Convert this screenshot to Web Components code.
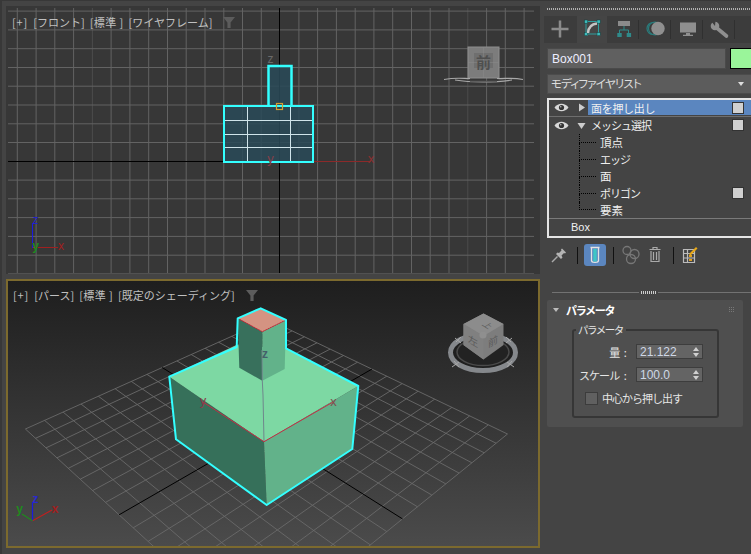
<!DOCTYPE html>
<html lang="ja"><head><meta charset="utf-8"><title>3ds Max</title>
<style>html,body{margin:0;padding:0;background:#444;overflow:hidden}</style></head>
<body>
<max-app>
  <max-viewport slot="views" labels="[+]|[フロント]|[標準 ]|[ワイヤフレーム]"><front-scene></front-scene></max-viewport>
  <max-viewport slot="views" active labels="[+]|[パース]|[標準 ]|[既定のシェーディング]"><persp-scene></persp-scene></max-viewport>
  <cmd-panel slot="panel">
    <cmd-tabs></cmd-tabs>
    <name-field value="Box001"></name-field>
    <mod-dropdown>モディファイヤリスト</mod-dropdown>
    <mod-stack>
      <stack-row selected eye arrow="right" check>面を押し出し</stack-row>
      <stack-row tight eye arrow="down" check>メッシュ選択</stack-row>
      <stack-row sub>頂点</stack-row>
      <stack-row sub tight>エッジ</stack-row>
      <stack-row sub>面</stack-row>
      <stack-row sub tight check>ポリゴン</stack-row>
      <stack-row sub last>要素</stack-row>
      <stack-row base>Box</stack-row>
    </mod-stack>
    <stack-tools></stack-tools>
    <panel-sep></panel-sep>
    <max-rollout title="パラメータ">
      <max-group legend="パラメータ">
        <max-spinner label="量 :" value="21.122"></max-spinner>
        <max-spinner label="スケール :" value="100.0"></max-spinner>
        <max-check>中心から押し出す</max-check>
      </max-group>
    </max-rollout>
  </cmd-panel>
</max-app>
<script>
const FONT = '"Noto Sans CJK JP","Liberation Sans",sans-serif';
function shadow(el, html){ el.attachShadow({mode:'open'}).innerHTML = html; }

class MaxApp extends HTMLElement{ constructor(){super(); shadow(this,`<style>
:host{display:grid;grid-template-columns:540px 211px;width:751px;height:554px;overflow:hidden;background:#444;border-top:1px solid #383838;box-sizing:border-box;font:11px ${FONT};color:#ddd}
.views{display:flex;flex-direction:column;gap:5px;padding:5px 0 0 4px;border-left:2px solid #383838;box-sizing:border-box;width:540px}
.panel{display:block;min-width:0;font-feature-settings:"palt"}
</style><div class="views"><slot name="views"></slot></div><div class="panel"><slot name="panel"></slot></div>`);}}

class MaxViewport extends HTMLElement{ constructor(){super();
  const labs=(this.getAttribute('labels')||'').split('|').map(t=>`<span>${t}</span>`).join('');
  shadow(this,`<style>
:host{display:block;position:relative;box-sizing:border-box;width:534px;height:268px;background:#373737;overflow:hidden}
:host([active]){height:269px;border:2px solid #7c6a2e;background:linear-gradient(#1e1e1e,#4b4b4b)}
.labels{position:absolute;left:6px;top:8px;display:flex;align-items:center;gap:5px;font-size:11px;line-height:16px;color:#c0c0c0}
.labels span:first-child{letter-spacing:.9px}
.labels span:nth-child(3){letter-spacing:.4px}
:host([active]) .labels{left:5px;top:6px}
svg{margin-left:5px;display:block}
</style><slot></slot><div class="labels">${labs}<svg width="14" height="13" viewBox="0 0 14 13"><path d="M1 1H13L8.600 6.500V12H5.400V6.500Z" fill="#5c5c5c"/></svg></div>`);}}

class FrontScene extends HTMLElement{ constructor(){super();
  let g='';
  for(let k=0;k<28;k++){const x=17.3+18.77*k; const major=k===4||k===24; if(k===14)continue;
    g+=`<path d="M${x.toFixed(1)} 8V273" stroke="${major?'#4c4c4c':'#636363'}"/>`;}
  for(let k=-8;k<=6;k++){const y=161.3+18.77*k; if(k===0)continue;
    g+=`<path d="M8 ${y.toFixed(1)}H534" stroke="#636363"/>`;}
  shadow(this,`<style>:host{display:block}svg{display:block;font-family:"Liberation Sans",sans-serif}</style>
<svg width="534" height="268" viewBox="6 6 534 268">
${g}
<path d="M8 161.500H224" stroke="#000"/><path d="M279.500 8V273" stroke="#000"/>
<path d="M313 161.500H371" stroke="#8c2a2a"/>
<path d="M224 106H313V162H224Z" fill="#2a4a58" fill-opacity=".88"/>
<path d="M268.500 66H291.500V106H268.500Z" fill="#2a4a58" fill-opacity=".88"/>
<g stroke="#cfe4ea" fill="none"><path d="M247.500 106V162M290.500 106V162M224 120.500H313M224 134.500H313M224 147.500H313"/></g>
<path d="M224 106H313V162H224Z" fill="none" stroke="#3ff" stroke-width="2"/>
<path d="M268.500 105.500V66H291.500V105.500" fill="none" stroke="#3ff" stroke-width="2.500"/>
<rect x="276.500" y="103.500" width="6" height="6" fill="none" stroke="#d8a030" stroke-width="1.200"/>
<text x="270.500" y="63" font-size="12" fill="#6a6a6a" text-anchor="middle">z</text>
<text x="270.500" y="163" font-size="13" fill="#84404a" text-anchor="middle">y</text>
<text x="371" y="162.500" font-size="13" fill="#8c3030" text-anchor="middle">x</text>
<path d="M32.500 223V248" stroke="#1a1ae0"/><path d="M33 247.500H58" stroke="#a02020"/>
<text x="35.500" y="224" font-size="12" fill="#2222cc" text-anchor="middle">z</text>
<text x="61" y="249.500" font-size="12" fill="#a02020" text-anchor="middle">x</text>
<text x="35.500" y="249.500" font-size="12" font-weight="bold" fill="#1f8a1f" text-anchor="middle">y</text>
<rect x="468" y="47" width="31" height="31" fill="#7c7c7c" stroke="#8e8e8e"/>
<rect x="474" y="53" width="19" height="15" fill="#6f6f6f"/>
<path d="M483.500 47V78M468 62.500H499" stroke="#8a8a8a" opacity=".5"/>
<text x="483.500" y="68" font-size="15" font-weight="bold" fill="#4f4f4f" text-anchor="middle" style='font-family:${FONT}'>前</text>
<path d="M444 79.500C458 77 466 79 470 78.500M497 78.500C505 79 512 77 523 79.500M455 80C470 82.500 495 82.500 512 80" fill="none" stroke="#a8a8a8" stroke-width="1.200"/>
<path d="M470 81.500H497" stroke="#5f5f5f" stroke-width="1.500"/>
</svg>`);}}

class PerspScene extends HTMLElement{ constructor(){super();
  const P=[[268.7,319.7],[507.5,434],[254.3,638.7],[25.4,429]];
  const [a,b,c,d]=P;
  const dx1=b[0]-c[0],dx2=d[0]-c[0],sx=a[0]-b[0]+c[0]-d[0],dy1=b[1]-c[1],dy2=d[1]-c[1],sy=a[1]-b[1]+c[1]-d[1];
  const det=dx1*dy2-dx2*dy1, g0=(sx*dy2-dx2*sy)/det, h0=(dx1*sy-sx*dy1)/det;
  const A=b[0]-a[0]+g0*b[0],B=d[0]-a[0]+h0*d[0],C=a[0],D=b[1]-a[1]+g0*b[1],E=d[1]-a[1]+h0*d[1],F=a[1];
  const pr=(u,v)=>{const w=g0*u+h0*v+1;return ((A*u+B*v+C)/w).toFixed(1)+' '+((D*u+E*v+F)/w).toFixed(1)};
  let g='';const N=16;
  for(let i=0;i<=N;i++){const t=i/N; if(i===N/2)continue;
    g+=`M${pr(t,0)}L${pr(t,1)}M${pr(0,t)}L${pr(1,t)}`;}
  const axes=`M${pr(.5,0)}L${pr(.5,1)}M${pr(0,.5)}L${pr(1,.5)}`;
  shadow(this,`<style>:host{display:block}svg{display:block;font-family:"Liberation Sans",sans-serif}</style>
<svg width="530" height="265" viewBox="8 281 530 265">
<path d="${g}" fill="none" stroke="#6a6a6a" stroke-width=".9"/>
<path d="${axes}" fill="none" stroke="#000" stroke-width="1"/>
<path d="M169.300 376.700L264 441.700L266.700 505L176 439.300Z" fill="#36705a"/>
<path d="M264 441.700L358.300 386L352.300 449L266.700 505Z" fill="#62b28a"/>
<path d="M169.300 376.700L236.700 345L286 348.300L358.300 386L264 441.700Z" fill="#7dd8a3"/>
<path d="M237.700 318.300L262.300 331.700L262.300 380.700L239.300 367.700Z" fill="#38705c"/>
<path d="M262.300 331.700L286 320L284.700 369L262.300 380.700Z" fill="#62b28a"/>
<path d="M237.700 318.300L260.700 308.300L286 320L262.300 331.700Z" fill="#d49382"/>
<path d="M237.700 318.300L262.300 331.700L286 320" fill="none" stroke="#c8283a" stroke-width="1" stroke-dasharray="2 .6"/>
<path d="M264 441.700L263 395L262.300 380.700L262 350" fill="none" stroke="#6f868c" stroke-width="1"/>
<path d="M203 402L264 441.700L333 402" fill="none" stroke="#c42c44"/>
<path d="M169.300 376.700L236.700 347L237.700 318.300L260.700 308.300L286 320L286 348.300L358.300 386L352.300 449L266.700 505L176 439.300Z" fill="none" stroke="#3ff" stroke-width="2" stroke-linejoin="round"/>
<text x="265" y="358" font-size="12" font-weight="bold" fill="#44606a" text-anchor="middle">z</text>
<text x="203" y="405" font-size="13" fill="#8a3a4a" text-anchor="middle">y</text>
<text x="333.500" y="405.500" font-size="13" fill="#7d5050" text-anchor="middle">x</text>
<path d="M32.500 520.700V502" stroke="#1a1ae0" stroke-width="1.200"/>
<path d="M32.500 520.700L52 510" stroke="#c02020" stroke-width="1.200"/>
<path d="M32.500 520.700L22 514" stroke="#1e8a1e" stroke-width="1.200"/>
<text x="35.500" y="503" font-size="12" font-weight="bold" fill="#2a2acc" text-anchor="middle">z</text>
<text x="55" y="512.500" font-size="12" font-weight="bold" fill="#a02020" text-anchor="middle">x</text>
<text x="19.500" y="513" font-size="12" font-weight="bold" fill="#1f8a1f" text-anchor="middle">y</text>
<ellipse cx="483" cy="352.500" rx="32.500" ry="18" fill="#1f1f1f" stroke="#85888c" stroke-width="5"/>
<ellipse cx="483" cy="352" rx="26" ry="13.500" fill="#222" stroke="#4a4a4a" stroke-width="1.500"/>
<path d="M483.500 313.500L503.500 324V345L483.500 359.500L463.500 345V324Z" fill="#7d7d7d"/>
<path d="M463.500 324L483.500 336L503.500 324L483.500 313.500Z" fill="#8c8c8c"/>
<path d="M463.500 324L483.500 336V359.500L463.500 345Z" fill="#808080"/>
<circle cx="483" cy="335" r="3.500" fill="#8f8f8f"/>
<g style='font-family:${FONT}' fill="#5c5c5c" font-size="10" text-anchor="middle">
<text transform="translate(485 327) scale(1 .65) rotate(45)">上</text>
<text transform="translate(473 345) skewY(30)">左</text>
<text transform="translate(493 345) skewY(-30)">前</text></g>
<g stroke="#a8a8a8" stroke-width="1" fill="none"><path d="M455 338l6 5m0-6l-5 5M512 338l-6 5m0-6l5 5M452 367l7-5m-5-1l5 6M514 367l-7-5m5-1l-5 6"/></g>
</svg>`);}}

class CmdPanel extends HTMLElement{ constructor(){super(); shadow(this,`<style>
:host{display:flex;flex-direction:column;height:553px;box-sizing:border-box}
.dots{height:2px;margin:7px 0 0 7px;background:repeating-linear-gradient(90deg,#b0b0b0 0 1px,transparent 1px 2px)}
</style><div class="dots"></div><slot></slot>`);}}

const ICONS=[
 `<path d="M7.500 13H24.500M16 4.500V21.500" stroke="#8b8b8b" stroke-width="2.500"/>`,
 `<rect x="10" y="5.500" width="12.500" height="12.500" fill="none" stroke="#2fa0a0"/><g fill="#3dbcbc" stroke="#163e3e" stroke-width=".5"><rect x="8.500" y="4" width="3.200" height="3.200"/><rect x="21" y="4" width="3.200" height="3.200"/><rect x="8.500" y="16.500" width="3.200" height="3.200"/><rect x="21" y="16.500" width="3.200" height="3.200"/></g><path d="M12 17C12.500 11 15.500 8 21 7.500" fill="none" stroke="#c4c4c4" stroke-width="2.500"/>`,
 `<rect x="10" y="5" width="12" height="5" fill="#8b8b8b"/><path d="M16 10V14M11.500 17.500V14H20.500V17.500" fill="none" stroke="#2f8a8a"/><rect x="9.300" y="17" width="4.400" height="4" fill="#2f8a8a"/><rect x="18.700" y="17" width="4.400" height="4" fill="#2f8a8a"/>`,
 `<g fill="none" stroke="#2a7c7c" stroke-width="1.200"><circle cx="13" cy="12.500" r="6"/><circle cx="15" cy="12.500" r="6.500"/></g><circle cx="18" cy="12.500" r="6.700" fill="#8f8f8f"/>`,
 `<rect x="8" y="6.500" width="16" height="10" fill="#8f8f8f"/><path d="M14 17H18V18.800H21V20H11V18.800H14Z" fill="#8f8f8f"/>`,
 `<path d="M11 10.500L22.500 20" stroke="#8f8f8f" stroke-width="3.600" stroke-linecap="round"/><circle cx="11" cy="10" r="4.300" fill="#8f8f8f"/><path d="M11 10L7 5H11.500Z" fill="#3c3c3c"/>`
];
class CmdTabs extends HTMLElement{ constructor(){super();
  const t=ICONS.map((s,i)=>`<div class="t${i===1?' on':''}${i>1?' sep':''}"><svg width="32" height="28" viewBox="0 0 32 28">${s}</svg></div>`).join('');
  shadow(this,`<style>
:host{display:flex;height:27px;margin:6px 0 0 4px;background:#3c3c3c}
.t{width:32px;height:27px;position:relative}
.t.on{background:#454545;width:30px;margin:0 1px}
.t.on svg{margin-left:-1px}
.t.sep::after{content:"";position:absolute;right:1px;top:4px;height:19px;width:1px;background:#303030}
svg{display:block}
</style>${t}`);}}

class NameField extends HTMLElement{ constructor(){super(); shadow(this,`<style>
:host{display:flex;height:21px;margin:5px 0 0 7px;gap:4px}
.f{background:#606060;border:1px solid #4a4a4a;font:12px/20px "Liberation Sans",sans-serif;color:#eef;padding-left:4px;box-sizing:border-box;width:179px}
.c{flex:1;background:#9af59a;border:1px solid #000;border-right:none}
</style><div class="f">${this.getAttribute('value')}</div><div class="c"></div>`);}}

class ModDropdown extends HTMLElement{ constructor(){super(); shadow(this,`<style>
:host{display:flex;align-items:center;height:20px;margin:5px 0 0 7px;background:#5c5c5c;border:1px solid #4c4c4c;border-right:none;box-sizing:border-box;padding:0 7px 2px 3px;justify-content:space-between;font-size:11.500px;letter-spacing:-.8px;color:#ddd}
i{width:0;height:0;border:3.500px solid transparent;border-top:4.500px solid #ddd;border-bottom:none;margin-top:2px}
</style><slot></slot><i></i>`);}}

class ModStack extends HTMLElement{ constructor(){super(); shadow(this,`<style>
:host{display:block;margin:4px 0 0 7px;border:2px solid #e6e6e6;border-right:none;height:140px;box-sizing:border-box;background:#444}
</style><slot></slot>`);}}

class StackRow extends HTMLElement{ constructor(){super();
  const h=a=>this.hasAttribute(a);
  const eye=h('eye')?`<svg class="eye" width="15" height="9" viewBox="0 0 15 9"><path d="M.5 4.500C4 -.5 11 -.5 14.500 4.500C11 9.500 4 9.500 .5 4.500Z" fill="#d8d8d8"/><circle cx="7.500" cy="4.500" r="2.600" fill="#333"/><circle cx="6.800" cy="3.800" r=".7" fill="#ccc"/></svg>`:'';
  const ar=this.getAttribute('arrow');
  const arrow=ar==='right'?`<svg class="ar" width="9" height="9" viewBox="0 0 9 9"><path d="M2 .5L8 4.500L2 8.500Z" fill="#ccc"/></svg>`:ar==='down'?`<svg class="ar" width="9" height="9" viewBox="0 0 9 9"><path d="M.5 2H8.500L4.500 8Z" fill="#ccc"/></svg>`:'';
  shadow(this,`<style>
:host{display:flex;align-items:center;height:17px;font:11.500px/17px ${FONT};color:#f0f0f0;position:relative;box-sizing:border-box}
:host([tight]){font-size:11px;letter-spacing:-1px;line-height:16px}
:host([selected]){border-bottom:1px solid #6e6e6e;padding-bottom:1px}
:host([base]){border-top:1px solid #7a7a7a;height:18px;font:11px/17px "Liberation Sans",sans-serif;padding-left:17px}
:host([sub]){padding-left:30px}
:host([last]){height:16px}
.eye{margin-left:5px;flex:none}.ar{margin-left:8px;flex:none}
.txt{flex:1;height:100%;padding-left:3px;margin-left:2px}
:host([selected]) .txt{background:#5b86bf;font-size:11px;letter-spacing:-.3px;line-height:16px}
.tree{width:17px;align-self:stretch;flex:none;margin-right:4px}
.tree::before{content:"";display:block;height:50%;box-sizing:border-box;border-left:1px dotted #000;border-bottom:1px dotted #000}
.tree::after{content:"";display:block;height:50%;border-left:1px dotted #000}
:host([last]) .tree::after{border:none}
:host([sub]) .txt{padding:0;margin:0}
.cb{position:absolute;right:7px;top:2px;width:10px;height:10px;background:#d0d0d0;border:1px solid #333}
</style>${eye}${arrow}${h('sub')?'<span class="tree"></span>':''}<span class="txt"><slot></slot></span>${h('check')?'<span class="cb"></span>':''}`);}}

class StackTools extends HTMLElement{ constructor(){super(); shadow(this,`<style>
:host{display:flex;align-items:center;height:22px;margin:6px 0 0 7px}
svg{display:block;flex:none}
.d{width:1px;height:17px;background:#111;flex:none}
.on{width:22px;height:22px;background:#5b86bf;border-radius:3px;flex:none;display:flex;align-items:center;justify-content:center}
</style>
<svg width="30" height="22" viewBox="0 0 30 22"><path d="M5 18L10.500 12.500" stroke="#aaa" stroke-width="1.500"/><path d="M9 10L14 15L15.500 13.500L14.500 11.500L17 9L18 9.500L19 8.500L15 4.500L14 5.500L14.500 6.500L12 9L10.500 8.500Z" fill="#b4b4b4"/></svg>
<div class="d"></div><div style="width:6px"></div>
<div class="on"><svg width="12" height="18" viewBox="0 0 12 18"><path d="M1.500 1.500H10.500M2.500 1.500V14.500C2.500 17 9.500 17 9.500 14.500V1.500" fill="none" stroke="#e4e4e4" stroke-width="1.300"/><rect x="4.300" y="3" width="3.400" height="12.500" fill="#3fc6c6"/></svg></div>
<div style="width:7px"></div><div class="d"></div>
<svg width="34" height="22" viewBox="0 0 34 22"><g fill="none" stroke="#777" stroke-width="1.300"><circle cx="13" cy="6.500" r="4"/><circle cx="20.500" cy="10" r="4.500"/><circle cx="17" cy="15" r="4.500"/></g></svg>
<svg width="14" height="22" viewBox="0 0 14 22"><path d="M1.500 5.500H12.500M5 5.500V3.500H9V5.500M3 7V17.500H11V7M5.500 8V16M8.500 8V16" fill="none" stroke="#aaa" stroke-width="1.200"/></svg>
<div style="width:11px"></div><div class="d"></div><div style="width:8px"></div>
<svg width="16" height="18" viewBox="0 0 16 18"><g fill="none" stroke="#bbb" stroke-width="1.200"><path d="M1.500 3.500H12.500V16.500H1.500ZM1.500 7.500H12.500M1.500 12H12.500M5.500 3.500V16.500"/></g><rect x="7" y="9" width="3" height="2" fill="#e0a020"/><rect x="7" y="13" width="3" height="2" fill="#e0a020"/><path d="M7 8L14 1L15.500 2.500L8.500 9.500Z" fill="#e8a818"/></svg>
`);}}

class PanelSep extends HTMLElement{ constructor(){super(); shadow(this,`<style>
:host{display:flex;align-items:center;height:3px;margin:25px 0 0 12px;gap:2px}
.l{height:1px;background:#727272}
.d{width:15px;height:3px;background:repeating-linear-gradient(90deg,#ccc 0 1px,transparent 1px 2px)}
</style><div class="l" style="width:87px"></div><div class="d"></div><div class="l" style="flex:1"></div>`);}}

class MaxRollout extends HTMLElement{ constructor(){super(); shadow(this,`<style>
:host{display:block;margin:6px 8px 0 7px;height:127px;background:#4f4f4f;border-radius:2px;box-sizing:border-box}
.h{display:flex;align-items:center;height:20px;padding-left:6px;font:bold 11px ${FONT};color:#fff;gap:6px}
i{width:0;height:0;border:3.500px solid transparent;border-top:4.500px solid #bbb;border-bottom:none}
.h span{flex:1;margin-left:1px;letter-spacing:-1.300px}
svg{margin-right:8px}
.b{padding:9px 24px 0 25px}
</style><div class="h"><i></i><span>${this.getAttribute('title')}</span><svg width="6" height="6" viewBox="0 0 6 6"><path d="M0 .5H6M0 2.500H6M0 4.500H6" stroke="#777" stroke-dasharray="1 1"/></svg></div><div class="b"><slot></slot></div>`);}}

class MaxGroup extends HTMLElement{ constructor(){super(); shadow(this,`<style>
:host{display:block;position:relative;height:89px;border:2px solid #363636;border-radius:3px;box-sizing:border-box;padding:13px 14px 0 0}
.lg{position:absolute;left:2px;top:-8px;padding:0 3px 0 2px;background:#4f4f4f;font:10.500px/13px ${FONT};letter-spacing:-1.500px;color:#e6e6e6}
</style><div class="lg">${this.getAttribute('legend')}</div><slot></slot>`);}}

class MaxSpinner extends HTMLElement{ constructor(){super(); shadow(this,`<style>
:host{display:flex;align-items:center;justify-content:flex-end;height:15px;margin-bottom:8px;gap:10px;font:11px ${FONT};color:#e6e6e6}
.lb{letter-spacing:-.9px;word-spacing:3px}
.v{width:67px;height:15px;box-sizing:border-box;background:#646464;border:1px solid #3d3d3d;display:flex;align-items:center;justify-content:space-between;padding:0 3px;font:12px "Liberation Sans",sans-serif;color:#cfd8e6}
svg{display:block}
</style><span class="lb">${this.getAttribute('label')}</span><div class="v"><span>${this.getAttribute('value')}</span><svg width="6" height="10" viewBox="0 0 6 10"><path d="M3 0L6 4H0ZM3 10L0 6H6Z" fill="#d0d0d0"/></svg></div>`);}}

class MaxCheck extends HTMLElement{ constructor(){super(); shadow(this,`<style>
:host{display:flex;align-items:center;gap:4px;margin:9px 0 0 11px;font:11px ${FONT};letter-spacing:-1px;color:#e6e6e6;height:14px}
i{width:13px;height:13px;box-sizing:border-box;background:#606060;border:1px solid #3c3c3c;flex:none}
</style><i></i><slot></slot>`);}}

const defs={'max-app':MaxApp,'max-viewport':MaxViewport,'front-scene':FrontScene,'persp-scene':PerspScene,'cmd-panel':CmdPanel,'cmd-tabs':CmdTabs,'name-field':NameField,'mod-dropdown':ModDropdown,'mod-stack':ModStack,'stack-row':StackRow,'stack-tools':StackTools,'panel-sep':PanelSep,'max-rollout':MaxRollout,'max-group':MaxGroup,'max-spinner':MaxSpinner,'max-check':MaxCheck};
for(const k in defs)customElements.define(k,defs[k]);
</script>
</body></html>
